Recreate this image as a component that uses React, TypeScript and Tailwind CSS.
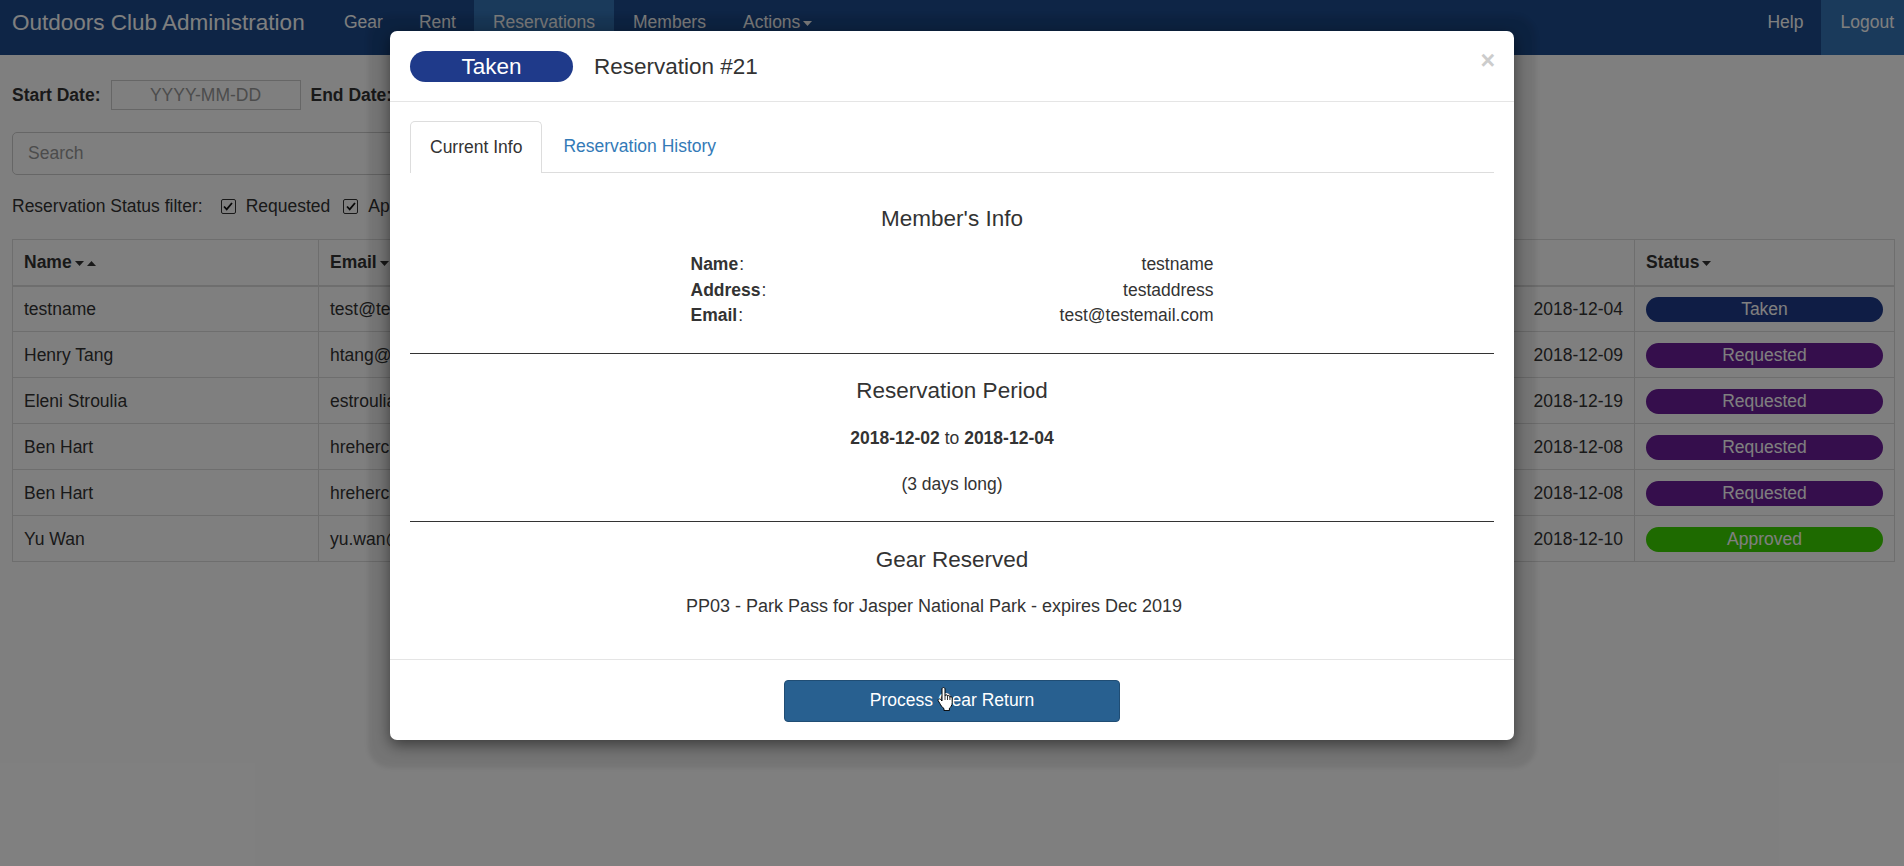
const reservations = [
  { name: "testname", email: "test@testemail.com", phone: "780-555-0101", start: "2018-12-02", end: "2018-12-04", status: "Taken" },
  { name: "Henry Tang", email: "htang@ualberta.ca", phone: "780-555-0144", start: "2018-12-07", end: "2018-12-09", status: "Requested" },
  { name: "Eleni Stroulia", email: "estroulia@ualberta.ca", phone: "780-555-0178", start: "2018-12-17", end: "2018-12-19", status: "Requested" },
  { name: "Ben Hart", email: "hreherchuk@ualberta.ca", phone: "780-555-0120", start: "2018-12-06", end: "2018-12-08", status: "Requested" },
  { name: "Ben Hart", email: "hreherchuk@ualberta.ca", phone: "780-555-0120", start: "2018-12-06", end: "2018-12-08", status: "Requested" },
  { name: "Yu Wan", email: "yu.wan@ualberta.ca", phone: "780-555-0199", start: "2018-12-08", end: "2018-12-10", status: "Approved" },
];

const statusColors: Record<string, string> = {
  Taken: "bg-[#1f3a8a]",
  Requested: "bg-[#6a1d98]",
  Approved: "bg-[#3dd400]",
};

const memberInfo = [
  { label: "Name", value: "testname" },
  { label: "Address", value: "testaddress" },
  { label: "Email", value: "test@testemail.com" },
];

const CaretDown = () => (
  <svg width="9" height="5" viewBox="0 0 9 5" className="ml-[3px] inline-block fill-current">
    <path d="M0 0h9L4.5 5z" />
  </svg>
);

const CaretUp = () => (
  <svg width="9" height="5" viewBox="0 0 9 5" className="ml-[3px] inline-block fill-current">
    <path d="M0 5h9L4.5 0z" />
  </svg>
);

const Check = () => (
  <span className="mr-[10px] inline-flex h-[15px] w-[15px] items-center justify-center rounded-[2px] border border-[#333] bg-white">
    <svg width="10" height="9" viewBox="0 0 10 9">
      <path d="M1 4.5l2.7 2.8L9 1" fill="none" stroke="#111" strokeWidth="1.8" />
    </svg>
  </span>
);

const HandCursor = () => (
  <svg width="18" height="24" viewBox="0 0 18 24" className="absolute left-[937px] top-[687px]">
    <path
      d="M6.5 0.5c0.8 0 1.5 0.7 1.5 1.5v6.8c0.2-0.6 0.7-1 1.3-1c0.7 0 1.2 0.5 1.2 1.2v0.4c0.2-0.5 0.7-0.8 1.2-0.8c0.7 0 1.2 0.5 1.2 1.2v0.6c0.2-0.4 0.6-0.7 1.1-0.7c0.7 0 1.2 0.5 1.2 1.2v4.8c0 2.6-1.4 4.6-2.8 5.6v2.3H7v-2c-1.6-1-3-3-4.4-5.5l-1.3-2.2c-0.4-0.6-0.2-1.4 0.4-1.8c0.6-0.4 1.4-0.2 1.8 0.4L5 14V2c0-0.8 0.7-1.5 1.5-1.5z"
      fill="#fff"
      stroke="#000"
      strokeWidth="1"
    />
    <path d="M8 9v4M10.5 9.5v3.5M12.9 10.5v2.5" stroke="#000" strokeWidth="0.8" />
  </svg>
);

export default function App() {
  return (
    <div className="relative h-[866px] overflow-hidden bg-white font-['Liberation_Sans',Arial,sans-serif] text-[17.5px] leading-[25px] text-[#333]">
      <nav className="flex h-[55px] bg-[#1d4b8c] text-white">
        <div className="w-[326px] pl-3 pt-[10px] text-[22.5px] leading-[26px]">Outdoors Club Administration</div>
        <ul className="flex">
          <li className="px-[18px] pt-[10px]">Gear</li>
          <li className="px-[18px] pt-[10px]">Rent</li>
          <li className="bg-[#3474b6] px-[19px] pt-[10px]">Reservations</li>
          <li className="px-[19px] pt-[10px]">Members</li>
          <li className="px-[18px] pt-[10px]">
            Actions
            <CaretDown />
          </li>
        </ul>
        <ul className="ml-auto flex">
          <li className="px-[18px] pt-[10px]">Help</li>
          <li className="bg-[#3474b6] pl-[19px] pr-[10px] pt-[10px]">Logout</li>
        </ul>
      </nav>

      <div className="px-3">
        <div className="mt-[25px] flex h-[30px] items-center">
          <span className="font-bold">Start Date:</span>
          <div className="ml-[10px] flex h-[30px] w-[190px] items-center justify-center border border-[#ccc] text-[#999]">YYYY-MM-DD</div>
          <span className="ml-[10px] font-bold">End Date:</span>
          <div className="ml-[10px] flex h-[30px] w-[190px] items-center justify-center border border-[#ccc] text-[#999]">YYYY-MM-DD</div>
        </div>

        <div className="mt-[22px] flex h-[43px] w-[1180px] items-center rounded-[5px] border border-[#ccc] px-[15px] text-[#999]">Search</div>

        <div className="mt-[19px] flex h-[24px] items-center">
          <span className="mr-[18px]">Reservation Status filter:</span>
          <Check />
          <span className="mr-[13px]">Requested</span>
          <Check />
          <span className="mr-[13px]">Approved</span>
          <Check />
          <span className="mr-[13px]">Taken</span>
          <Check />
          <span>Returned</span>
        </div>

        <table className="mt-[21px] w-[1882px] table-fixed border-collapse border border-[#ddd]">
          <colgroup>
            <col className="w-[306px]" />
            <col className="w-[360px]" />
            <col className="w-[300px]" />
            <col className="w-[300px]" />
            <col className="w-[356px]" />
            <col className="w-[260px]" />
          </colgroup>
          <thead>
            <tr className="h-[46px]">
              <th className="border border-b-2 border-[#ddd] px-[11px] text-left font-bold">
                Name
                <CaretDown />
                <CaretUp />
              </th>
              <th className="border border-b-2 border-[#ddd] px-[11px] text-left font-bold">
                Email
                <CaretDown />
                <CaretUp />
              </th>
              <th className="border border-b-2 border-[#ddd] px-[11px] text-left font-bold">Phone</th>
              <th className="border border-b-2 border-[#ddd] px-[11px] text-left font-bold">Start Date</th>
              <th className="border border-b-2 border-[#ddd] px-[11px] text-left font-bold"></th>
              <th className="border border-b-2 border-[#ddd] px-[11px] text-left font-bold">
                Status
                <CaretDown />
              </th>
            </tr>
          </thead>
          <tbody>
            {reservations.map((r, i) => (
              <tr key={i} className="h-[46px]">
                <td className="border border-[#ddd] px-[11px] pt-[2px]">{r.name}</td>
                <td className="border border-[#ddd] px-[11px] pt-[2px]">{r.email}</td>
                <td className="border border-[#ddd] px-[11px] pt-[2px]">{r.phone}</td>
                <td className="border border-[#ddd] px-[11px] pt-[2px]">{r.start}</td>
                <td className="border border-[#ddd] px-[11px] pt-[2px] text-right">{r.end}</td>
                <td className="border border-[#ddd] px-[11px] pt-[2px]">
                  <div className={`flex h-[25px] items-center justify-center rounded-full text-white ${statusColors[r.status]}`}>{r.status}</div>
                </td>
              </tr>
            ))}
          </tbody>
        </table>
      </div>

      <div className="absolute inset-0 bg-black/50" />

      <div className="absolute inset-0 flex justify-center pt-[31px]">
        <div className="h-fit w-[1124px] rounded-[7px] bg-white shadow-[0_5px_15px_rgba(0,0,0,0.5),0_6px_4px_22px_rgba(0,0,0,0.08)]">
          <div className="flex h-[71px] items-center border-b border-[#e5e5e5] pl-[20px] pr-[19px]">
            <div className="flex h-[31px] w-[163px] items-center justify-center rounded-full bg-[#1f3a8a] text-[22.5px] text-white">Taken</div>
            <h4 className="ml-[21px] text-[22.5px]">Reservation #21</h4>
            <span className="ml-auto mt-[-12px] text-[25px] font-bold leading-none text-[#ccc]">×</span>
          </div>

          <div className="px-[20px] pb-[40px] pt-[19px]">
            <ul className="flex h-[52px] border-b border-[#ddd]">
              <li className="mb-[-1px] flex items-center rounded-t-[5px] border border-b-0 border-[#ddd] bg-white px-[19px]">Current Info</li>
              <li className="ml-[2px] flex items-center px-[19px] text-[#337ab7]">Reservation History</li>
            </ul>

            <div className="flex flex-col items-center">
              <h4 className="mt-[33px] text-[22.5px] leading-[26px]">Member's Info</h4>
              <div className="mt-[20px] w-[523px] leading-[25.5px]">
                {memberInfo.map((m) => (
                  <div key={m.label} className="flex justify-between">
                    <span className="pr-[1px]">
                      <b className="mr-[1px]">{m.label}</b>:
                    </span>
                    <span>{m.value}</span>
                  </div>
                ))}
              </div>
            </div>

            <hr className="mt-[24px] border-[#333]" />

            <div className="flex flex-col items-center">
              <h4 className="mt-[24px] text-[22.5px] leading-[26px]">Reservation Period</h4>
              <p className="mt-[22px]">
                <b>2018-12-02</b> to <b>2018-12-04</b>
              </p>
              <p className="mt-[21px]">(3 days long)</p>
            </div>

            <hr className="mt-[24px] border-[#333]" />

            <div className="flex flex-col items-center">
              <h4 className="mt-[25px] text-[22.5px] leading-[26px]">Gear Reserved</h4>
              <p className="mt-[21px] pr-[36px] text-[18px]">PP03 - Park Pass for Jasper National Park - expires Dec 2019</p>
            </div>
          </div>

          <div className="flex justify-center border-t border-[#e5e5e5] pb-[18px] pt-[20px]">
            <button className="h-[42px] w-[336px] rounded-[4px] border border-[#204d74] bg-[#286090] text-white">Process Gear Return</button>
          </div>
        </div>
      </div>

      <HandCursor />
    </div>
  );
}
